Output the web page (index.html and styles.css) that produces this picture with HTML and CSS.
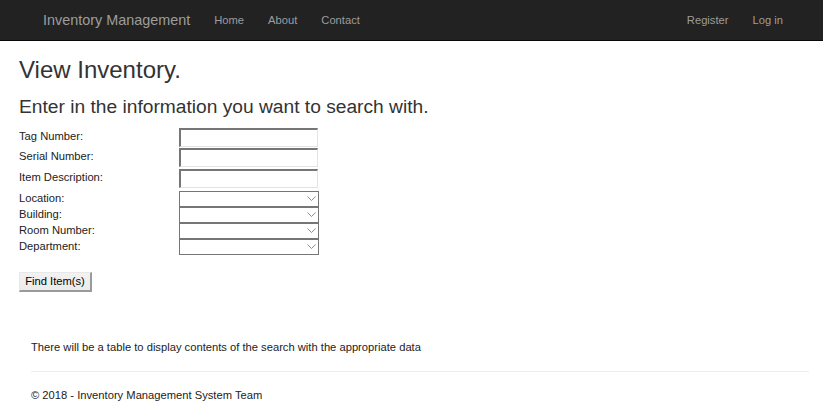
FILE: index.html
```html
<!DOCTYPE html>
<html>
<head>
<meta charset="utf-8">
<title>View Inventory</title>
<link rel="stylesheet" href="styles.css">
</head>
<body>
<nav class="navbar">
  <a class="brand" href="#">Inventory Management</a>
  <ul class="nav">
    <li><a href="#">Home</a></li>
    <li><a href="#">About</a></li>
    <li><a href="#">Contact</a></li>
  </ul>
  <ul class="nav nav-right">
    <li><a href="#">Register</a></li>
    <li><a href="#">Log in</a></li>
  </ul>
</nav>

<main class="search">
  <h2 class="title">View Inventory.</h2>
  <h3 class="subtitle">Enter in the information you want to search with.</h3>
  <form class="form">
    <div class="row text-row"><label class="lbl">Tag Number:</label><input class="txt" type="text"></div>
    <div class="row text-row"><label class="lbl">Serial Number:</label><input class="txt" type="text"></div>
    <div class="row text-row last-text"><label class="lbl">Item Description:</label><input class="txt" type="text"></div>
    <div class="row sel-row"><label class="lbl">Location:</label><span class="sel-wrap"><select class="sel"></select><svg class="chev" width="9" height="5" viewBox="0 0 9 5"><path d="M0.5 0.5 L4.5 4.5 L8.5 0.5" fill="none" stroke="#8a8a8a" stroke-width="1"/></svg></span></div>
    <div class="row sel-row"><label class="lbl">Building:</label><span class="sel-wrap"><select class="sel"></select><svg class="chev" width="9" height="5" viewBox="0 0 9 5"><path d="M0.5 0.5 L4.5 4.5 L8.5 0.5" fill="none" stroke="#8a8a8a" stroke-width="1"/></svg></span></div>
    <div class="row sel-row"><label class="lbl">Room Number:</label><span class="sel-wrap"><select class="sel"></select><svg class="chev" width="9" height="5" viewBox="0 0 9 5"><path d="M0.5 0.5 L4.5 4.5 L8.5 0.5" fill="none" stroke="#8a8a8a" stroke-width="1"/></svg></span></div>
    <div class="row sel-row"><label class="lbl">Department:</label><span class="sel-wrap"><select class="sel"></select><svg class="chev" width="9" height="5" viewBox="0 0 9 5"><path d="M0.5 0.5 L4.5 4.5 L8.5 0.5" fill="none" stroke="#8a8a8a" stroke-width="1"/></svg></span></div>
    <button class="btn" type="button">Find Item(s)</button>
  </form>
</main>

<div class="body-content">
  <p class="note">There will be a table to display contents of the search with the appropriate data</p>
  <hr class="rule">
  <footer class="footer">
    <p>&copy; 2018 - Inventory Management System Team</p>
  </footer>
</div>
</body>
</html>
```
FILE: styles.css
```css
* { box-sizing: border-box; }
html, body {
  margin: 0;
  padding: 0;
  background: #fff;
}
body {
  font-family: "Liberation Sans", Arial, Helvetica, sans-serif;
  font-size: 11.2px;
  line-height: 16px;
  color: #333;
}
.navbar {
  display: flex;
  align-items: stretch;
  height: 41px;
  background: #222;
  border-bottom: 1px solid #080808;
  padding-left: 31px;
  padding-right: 28px;
}
.brand {
  display: block;
  padding: 12px 12px;
  font-size: 14.4px;
  line-height: 16px;
  color: #9d9d9d;
  text-decoration: none;
}
.nav {
  display: flex;
  list-style: none;
  margin: 0;
  padding: 0;
}
.nav-right { margin-left: auto; }
.nav a {
  display: block;
  padding: 12px 12px;
  line-height: 16px;
  font-size: 11.2px;
  color: #9d9d9d;
  text-decoration: none;
}
.search {
  padding-left: 19px;
}
.title {
  margin: 16px 0 0;
  font-size: 24px;
  font-weight: normal;
  line-height: 26.4px;
  color: #333;
}
.subtitle {
  margin: 13px 0 0;
  font-size: 19.2px;
  font-weight: normal;
  line-height: 21.2px;
  color: #333;
}
.form {
  margin: 10px 0 0;
}
.row {
  display: flex;
  align-items: flex-start;
}
.lbl {
  width: 160px;
  line-height: 16px;
  color: #222;
}
.text-row { height: 20.5px; }
.last-text { height: 22px; }
.txt {
  width: 139px;
  height: 19px;
  margin: 0;
  padding: 1px 2px;
  border-style: solid;
  border-width: 2px 1px 1px 2px;
  border-color: #767676 #e3e3e3 #e3e3e3 #767676;
  background: #fff;
  font: inherit;
}
.sel-row { height: 16px; }
.sel-row .lbl { margin-top: -1px; }
.sel-wrap {
  position: relative;
  display: block;
  width: 140px;
  height: 16px;
}
.sel {
  -webkit-appearance: none;
  appearance: none;
  display: block;
  width: 140px;
  height: 16px;
  margin: 0;
  padding: 0;
  border: 1px solid #767676;
  border-radius: 0;
  background: #fff;
  font: inherit;
}
.chev {
  position: absolute;
  right: 3px;
  top: 5px;
}
.btn {
  display: block;
  margin: 17px 0 0;
  height: 20px;
  width: 73px;
  padding: 0;
  font: inherit;
  font-size: 11.2px;
  color: #000;
  background: linear-gradient(#f2f2f2, #ebebeb);
  border-style: solid;
  border-width: 1px 2px 2px 1px;
  border-color: #e8e8e8 #9a9a9a #9a9a9a #e8e8e8;
  border-radius: 0;
}
.body-content {
  margin-left: 31px;
  width: 778px;
  padding-top: 47px;
}
.note {
  margin: 0;
  line-height: 16px;
  color: #222;
}
.rule {
  margin: 16px 0 0;
  border: 0;
  border-top: 1px solid #eee;
  height: 0;
}
.footer p {
  margin: 15px 0 0;
  line-height: 16px;
  color: #222;
}
```
